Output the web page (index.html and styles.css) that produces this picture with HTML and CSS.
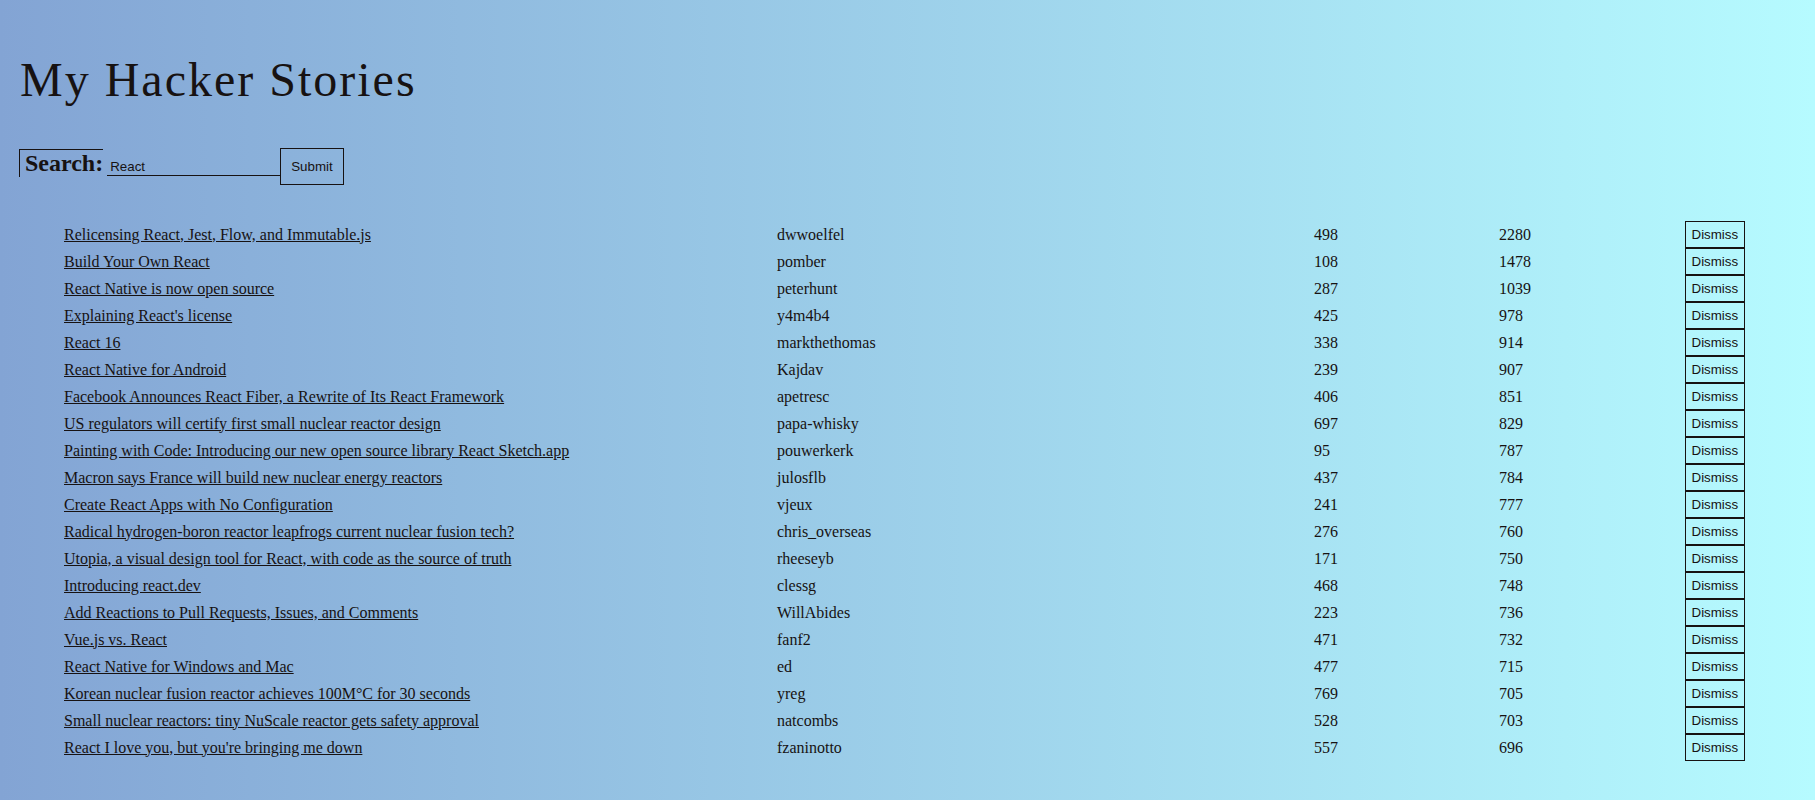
FILE: index.html
```
<!DOCTYPE html>
<html lang="en">
<head>
<meta charset="utf-8">
<title>My Hacker Stories</title>
<link rel="stylesheet" href="styles.css">
</head>
<body>
<div class="container">
  <h1 class="headline">My Hacker Stories</h1>
  <form class="search-form">
    <label class="label" for="search">Search:</label>
    <input class="input" id="search" type="text" value="React">
    <button class="button button-large" type="submit">Submit</button>
  </form>
  <ul class="list">
    <li class="item"><span class="col-title"><a href="#">Relicensing React, Jest, Flow, and Immutable.js</a></span><span class="col-author">dwwoelfel</span><span class="col-num">498</span><span class="col-num">2280</span><span class="col-action"><button class="button button-small" type="button">Dismiss</button></span></li>
    <li class="item"><span class="col-title"><a href="#">Build Your Own React</a></span><span class="col-author">pomber</span><span class="col-num">108</span><span class="col-num">1478</span><span class="col-action"><button class="button button-small" type="button">Dismiss</button></span></li>
    <li class="item"><span class="col-title"><a href="#">React Native is now open source</a></span><span class="col-author">peterhunt</span><span class="col-num">287</span><span class="col-num">1039</span><span class="col-action"><button class="button button-small" type="button">Dismiss</button></span></li>
    <li class="item"><span class="col-title"><a href="#">Explaining React's license</a></span><span class="col-author">y4m4b4</span><span class="col-num">425</span><span class="col-num">978</span><span class="col-action"><button class="button button-small" type="button">Dismiss</button></span></li>
    <li class="item"><span class="col-title"><a href="#">React 16</a></span><span class="col-author">markthethomas</span><span class="col-num">338</span><span class="col-num">914</span><span class="col-action"><button class="button button-small" type="button">Dismiss</button></span></li>
    <li class="item"><span class="col-title"><a href="#">React Native for Android</a></span><span class="col-author">Kajdav</span><span class="col-num">239</span><span class="col-num">907</span><span class="col-action"><button class="button button-small" type="button">Dismiss</button></span></li>
    <li class="item"><span class="col-title"><a href="#">Facebook Announces React Fiber, a Rewrite of Its React Framework</a></span><span class="col-author">apetresc</span><span class="col-num">406</span><span class="col-num">851</span><span class="col-action"><button class="button button-small" type="button">Dismiss</button></span></li>
    <li class="item"><span class="col-title"><a href="#">US regulators will certify first small nuclear reactor design</a></span><span class="col-author">papa-whisky</span><span class="col-num">697</span><span class="col-num">829</span><span class="col-action"><button class="button button-small" type="button">Dismiss</button></span></li>
    <li class="item"><span class="col-title"><a href="#">Painting with Code: Introducing our new open source library React Sketch.app</a></span><span class="col-author">pouwerkerk</span><span class="col-num">95</span><span class="col-num">787</span><span class="col-action"><button class="button button-small" type="button">Dismiss</button></span></li>
    <li class="item"><span class="col-title"><a href="#">Macron says France will build new nuclear energy reactors</a></span><span class="col-author">julosflb</span><span class="col-num">437</span><span class="col-num">784</span><span class="col-action"><button class="button button-small" type="button">Dismiss</button></span></li>
    <li class="item"><span class="col-title"><a href="#">Create React Apps with No Configuration</a></span><span class="col-author">vjeux</span><span class="col-num">241</span><span class="col-num">777</span><span class="col-action"><button class="button button-small" type="button">Dismiss</button></span></li>
    <li class="item"><span class="col-title"><a href="#">Radical hydrogen-boron reactor leapfrogs current nuclear fusion tech?</a></span><span class="col-author">chris_overseas</span><span class="col-num">276</span><span class="col-num">760</span><span class="col-action"><button class="button button-small" type="button">Dismiss</button></span></li>
    <li class="item"><span class="col-title"><a href="#">Utopia, a visual design tool for React, with code as the source of truth</a></span><span class="col-author">rheeseyb</span><span class="col-num">171</span><span class="col-num">750</span><span class="col-action"><button class="button button-small" type="button">Dismiss</button></span></li>
    <li class="item"><span class="col-title"><a href="#">Introducing react.dev</a></span><span class="col-author">clessg</span><span class="col-num">468</span><span class="col-num">748</span><span class="col-action"><button class="button button-small" type="button">Dismiss</button></span></li>
    <li class="item"><span class="col-title"><a href="#">Add Reactions to Pull Requests, Issues, and Comments</a></span><span class="col-author">WillAbides</span><span class="col-num">223</span><span class="col-num">736</span><span class="col-action"><button class="button button-small" type="button">Dismiss</button></span></li>
    <li class="item"><span class="col-title"><a href="#">Vue.js vs. React</a></span><span class="col-author">fanf2</span><span class="col-num">471</span><span class="col-num">732</span><span class="col-action"><button class="button button-small" type="button">Dismiss</button></span></li>
    <li class="item"><span class="col-title"><a href="#">React Native for Windows and Mac</a></span><span class="col-author">ed</span><span class="col-num">477</span><span class="col-num">715</span><span class="col-action"><button class="button button-small" type="button">Dismiss</button></span></li>
    <li class="item"><span class="col-title"><a href="#">Korean nuclear fusion reactor achieves 100M°C for 30 seconds</a></span><span class="col-author">yreg</span><span class="col-num">769</span><span class="col-num">705</span><span class="col-action"><button class="button button-small" type="button">Dismiss</button></span></li>
    <li class="item"><span class="col-title"><a href="#">Small nuclear reactors: tiny NuScale reactor gets safety approval</a></span><span class="col-author">natcombs</span><span class="col-num">528</span><span class="col-num">703</span><span class="col-action"><button class="button button-small" type="button">Dismiss</button></span></li>
    <li class="item"><span class="col-title"><a href="#">React I love you, but you're bringing me down</a></span><span class="col-author">fzaninotto</span><span class="col-num">557</span><span class="col-num">696</span><span class="col-action"><button class="button button-small" type="button">Dismiss</button></span></li>
  </ul>
</div>
</body>
</html>
```
FILE: styles.css
```
html, body {
  margin: 0;
  padding: 0;
}

body {
  font-family: "Liberation Serif", "Times New Roman", serif;
  font-size: 16px;
  color: #171212;
}

.container {
  box-sizing: border-box;
  min-height: 100vh;
  padding: 20px 20px 0 20px;
  background: #83a4d4;
  background: linear-gradient(to left, #b6fbff, #83a4d4);
  color: #171212;
}

.headline {
  margin: 32px 0 0 0;
  font-size: 48px;
  font-weight: 300;
  letter-spacing: 2px;
  line-height: normal;
}

.search-form {
  display: flex;
  align-items: baseline;
  margin-top: 41px;
}

.label {
  border-top: 1px solid #171212;
  border-left: 1px solid #171212;
  padding-left: 5px;
  font-size: 24px;
  font-weight: bold;
  margin-left: -1px;
}

.input {
  box-sizing: border-box;
  width: 173px;
  margin-left: 4px;
  border: none;
  border-bottom: 1px solid #171212;
  background-color: transparent;
  font-family: "Liberation Sans", Arial, sans-serif;
  font-size: 13.33px;
  color: #171212;
  padding: 1px 3px;
  outline: none;
}

.button {
  background: transparent;
  border: 1px solid #171212;
  font-family: "Liberation Sans", Arial, sans-serif;
  font-size: 13.33px;
  color: #171212;
  cursor: pointer;
  line-height: 15px;
}

.button-large {
  padding: 10px;
}

.button-small {
  padding: 5px 5.5px;
}

.list {
  list-style: none;
  margin: 36px 0 0 0;
  padding: 0 0 0 39px;
}

.item {
  display: flex;
  align-items: center;
}

.item > span {
  box-sizing: border-box;
  padding: 0 5px;
  white-space: nowrap;
  overflow: hidden;
  text-overflow: ellipsis;
  flex: none;
}

.item a {
  color: inherit;
}

.col-title {
  width: 713px;
}

.col-author {
  width: 537px;
}

.col-num {
  width: 185px;
}

.col-num + .col-num {
  width: 186px;
}

.col-action {
  width: 80px;
}
```
